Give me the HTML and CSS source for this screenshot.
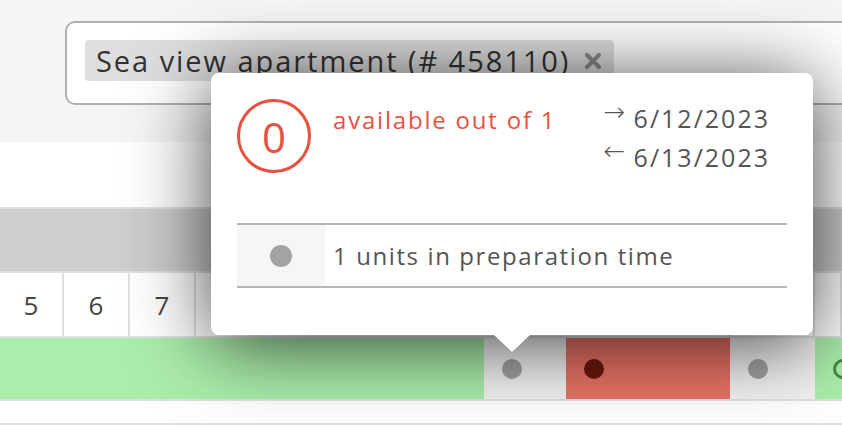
FILE: index.html
```html
<!DOCTYPE html>
<html lang="en">

<head>
  <meta charset="UTF-8">
  <meta name="viewport" content="width=device-width, initial-scale=1.0">
  <title>Availability</title>
  <link rel="stylesheet" href="styles.css">
</head>

<body>
  <div class="page">
    <div class="search-bar">
      <div class="search-input">
        <span class="tag">Sea view apartment (# 458110)
          <svg class="tag-remove" width="18" height="18" viewBox="0 0 18 18">
            <path d="M3 3 L15 15 M15 3 L3 15" stroke="#8c8c8c" stroke-width="4.2" stroke-linecap="round"/>
          </svg>
        </span>
      </div>
    </div>

    <div class="calendar">
      <div class="row row-blank"></div>
      <div class="row row-month"></div>
      <div class="row row-days">
        <div class="day">5</div>
        <div class="day">6</div>
        <div class="day">7</div>
        <div class="day">8</div>
        <div class="day">9</div>
        <div class="day">10</div>
        <div class="day">11</div>
        <div class="day">12</div>
        <div class="day">13</div>
        <div class="day">14</div>
        <div class="day">15</div>
        <div class="day"></div>
      </div>
      <div class="row row-bookings">
        <div class="slot slot-free span-7"></div>
        <div class="slot slot-prep"><span class="dot"></span></div>
        <div class="slot slot-booked span-2"><span class="dot dot-dark"></span></div>
        <div class="slot slot-prep"><span class="dot"></span></div>
        <div class="slot slot-free"><span class="ring"></span></div>
      </div>
      <div class="row row-empty"></div>
    </div>

    <div class="popover">
      <div class="popover-head">
        <div class="count">0</div>
        <div class="count-label">available out of 1</div>
        <div class="dates">
          <div class="date"><span class="arrow">&rarr;</span>6/12/2023</div>
          <div class="date"><span class="arrow">&larr;</span>6/13/2023</div>
        </div>
      </div>
      <table class="units">
        <tr>
          <td class="units-icon"><span class="dot"></span></td>
          <td class="units-text">1 units in preparation time</td>
        </tr>
      </table>
    </div>
  </div>
</body>

</html>
```

FILE: styles.css
```css
body {
  margin: 0;
  font-family: 'Open Sans', sans-serif;
  color: #444;
  background: #fff;
  overflow: hidden;
}

.page {
  position: relative;
  width: 842px;
  height: 426px;
  overflow: hidden;
}

/* search */

.search-bar {
  background: #f5f5f5;
  height: 142px;
  padding: 21px 0 0 65px;
  box-sizing: border-box;
}

.search-input {
  width: 900px;
  height: 84px;
  box-sizing: border-box;
  border: 2px solid #adb2b7;
  border-radius: 10px;
  background: #fff;
  padding: 17px 18px;
}

.tag {
  display: inline-flex;
  align-items: center;
  gap: 14px;
  height: 41px;
  padding: 0 12px 0 11px;
  background: #dedede;
  border-radius: 4px;
  font-size: 29px;
  letter-spacing: 1.95px;
  color: #333;
}

.tag-remove {
  display: block;
}

/* calendar */

.row {
  border-bottom: 2px solid #e0e0e0;
}

.row-blank {
  height: 65px;
}

.row-month {
  height: 62px;
  background: #cecece;
}

.row-days,
.row-bookings {
  display: grid;
  grid-template-columns: 64px 66px 66px 66px 65px 87px 70px 82px 81px 83px 85px 1fr;
}

.row-days {
  height: 63px;
}

.day {
  display: flex;
  align-items: center;
  justify-content: center;
  border-right: 2px solid #e0e0e0;
  font-size: 26px;
  color: #444;
}

.row-bookings {
  height: 61px;
}

.slot {
  display: flex;
  align-items: center;
  padding-left: 18px;
}

.span-7 {
  grid-column: span 7;
}

.span-2 {
  grid-column: span 2;
}

.slot-free {
  background: #abedab;
}

.slot-prep {
  background: #f3f3f3;
}

.slot-booked {
  background: #e87366;
}

.dot {
  display: inline-block;
  width: 20px;
  height: 20px;
  border-radius: 50%;
  background: #a3a3a3;
}

.dot-dark {
  background: #6b170c;
}

.ring {
  display: inline-block;
  width: 20px;
  height: 20px;
  box-sizing: border-box;
  border-radius: 50%;
  border: 3px solid #3e8e3e;
}

.row-empty {
  height: 22px;
}

/* popover */

.popover {
  position: absolute;
  left: 211px;
  top: 73px;
  width: 602px;
  height: 262px;
  box-sizing: border-box;
  padding: 26px;
  background: #fff;
  border-radius: 8px;
  box-shadow: 0 8px 80px rgba(0, 0, 0, 0.75);
}

.popover::after {
  content: "";
  position: absolute;
  left: 283px;
  bottom: -17px;
  border-left: 18px solid transparent;
  border-right: 18px solid transparent;
  border-top: 17px solid #fff;
}

.popover-head {
  display: flex;
  align-items: flex-start;
}

.count {
  width: 74px;
  height: 74px;
  box-sizing: border-box;
  border: 3px solid #e8503f;
  border-radius: 50%;
  display: flex;
  align-items: center;
  justify-content: center;
  font-size: 42px;
  color: #e8503f;
}

.count-label {
  flex: 1;
  margin: 4px 0 0 22px;
  font-size: 24px;
  letter-spacing: 1.8px;
  color: #e8503f;
}

.dates {
  margin: 0 17px 0 0;
  font-size: 25px;
  letter-spacing: 2px;
  color: #555;
}

.date {
  height: 39px;
}

.arrow {
  display: inline-block;
  width: 30px;
  margin-left: -1px;
  font-family: 'DejaVu Sans', sans-serif;
  font-weight: 200;
  font-size: 26px;
  line-height: 1;
  letter-spacing: 0;
  vertical-align: 7px;
}

.units {
  width: 100%;
  margin-top: 46px;
  border-collapse: collapse;
  border-top: 2px solid #b3b7bb;
  border-bottom: 2px solid #b3b7bb;
}

.units td {
  height: 61px;
  padding: 0;
}

.units-icon {
  width: 88px;
  background: #f6f6f6;
  text-align: center;
}

.units-icon .dot {
  width: 22px;
  height: 22px;
  vertical-align: middle;
}

.units-text {
  padding-left: 8px !important;
  font-size: 24px;
  letter-spacing: 1.6px;
  color: #555;
}
```
